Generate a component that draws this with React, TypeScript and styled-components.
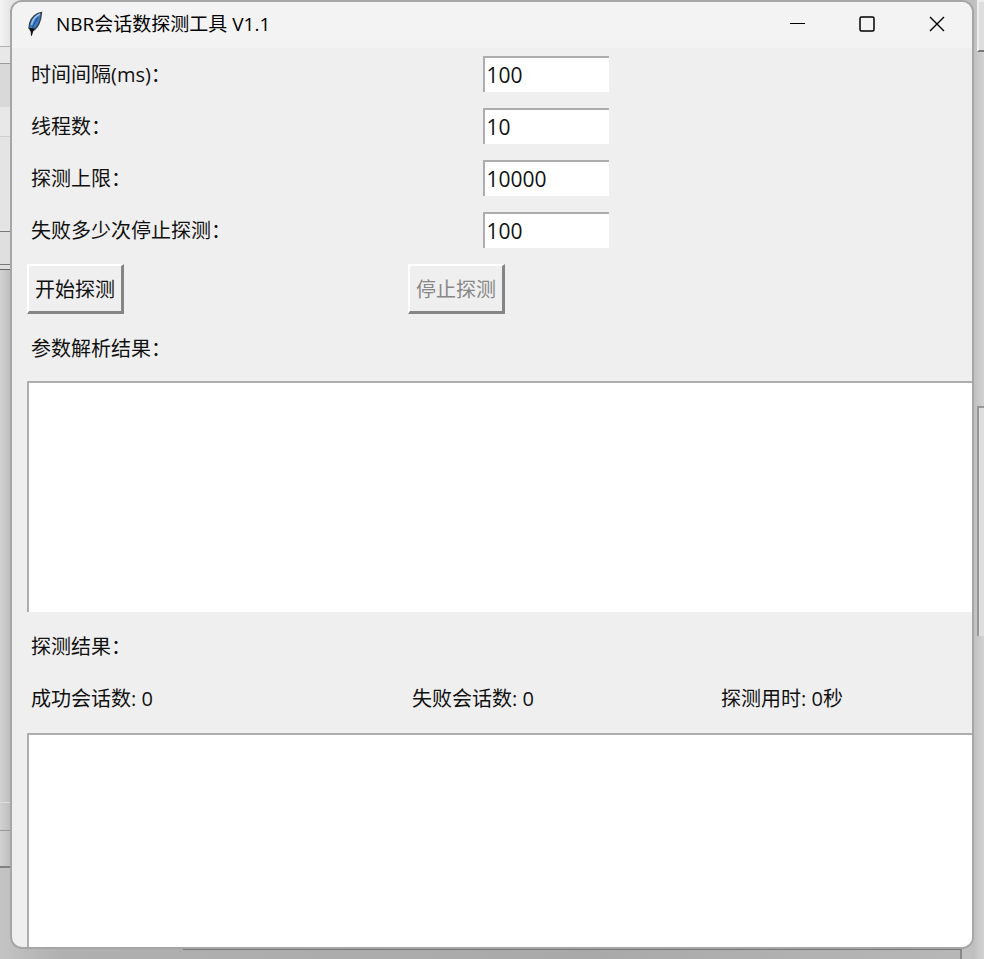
import React, { useState } from "react";
import styled, { createGlobalStyle } from "styled-components";

const GlobalStyle = createGlobalStyle`
  * { box-sizing: border-box; }
  html, body, #root { height: 100%; margin: 0; }
  body {
    font-family: "Open Sans", "Noto Sans CJK SC", sans-serif;
    font-size: 20px;
    line-height: 28px;
    color: #111;
    overflow: hidden;
  }
`;

const Desktop = styled.div`
  position: relative;
  height: 100vh;
  padding: 0 10px 10px;
  background: linear-gradient(90deg, #c4c4c4, #b0b0b0 60px, #a9a9a9 60%, #b8b8b8);
  overflow: hidden;
`;

const BackWindow = styled.div`
  position: absolute;
  inset: 0 auto 91px 0;
  width: 60px;
  background: linear-gradient(90deg, #d2d2d2, #bebebe 10px);
  border-bottom: 2px solid #808080;
`;

const BackBand = styled.div<{ $height: number; $fill: string; $line: string }>`
  height: ${(p) => p.$height}px;
  background: ${(p) => p.$fill};
  border-bottom: 1px solid ${(p) => p.$line};
`;

const BackEdge = styled.div`
  position: absolute;
  inset: 0 0 0 auto;
  width: 22px;
  padding-left: 15px;
  background: linear-gradient(90deg, #c0c0c0 12px, #d2d2d2);
`;

const BackButton = styled.div`
  height: 52px;
  margin-bottom: 354px;
  border: solid #eee;
  border-width: 2px 0 0 2px;
  border-bottom: 2px solid #777;
  background: #dedede;
`;

const BackField = styled.div`
  height: 230px;
  border: solid #979797;
  border-width: 2px 0 0 2px;
  background: #dedede;
`;

const BackShelf = styled.div`
  position: absolute;
  left: 183px;
  right: 22px;
  bottom: 0;
  height: 11px;
  border-top: 2px solid #777;
  border-right: 2px solid #888;
`;

const AppWindow = styled.main`
  position: relative;
  display: flex;
  flex-direction: column;
  height: 100%;
  border: 2px solid #a6a6a6;
  border-radius: 12px;
  background: #efefef;
  overflow: hidden;
`;

const TitleBar = styled.header`
  display: flex;
  align-items: center;
  flex: none;
  height: 46px;
  padding: 0 0 2px 14px;
  background: #f3f3f3;
`;

const Title = styled.h1`
  flex: 1;
  margin: 0 0 0 12px;
  font-size: 19px;
  font-weight: 400;
  color: #000;
`;

const CaptionButton = styled.button`
  display: flex;
  align-items: center;
  justify-content: center;
  width: 70px;
  height: 100%;
  padding: 0;
  border: 0;
  background: transparent;
`;

const Body = styled.form`
  display: flex;
  flex-direction: column;
  flex: 1;
  min-height: 0;
  padding-left: 15px;
`;

const Columns = styled.div`
  display: grid;
  grid-template-columns: 381fr 275fr 194fr 95fr;
  align-items: center;
`;

const Fields = styled(Columns)`
  grid-auto-rows: 52px;
`;

const Actions = styled(Columns)`
  height: 66px;
`;

const Stats = styled(Columns)`
  height: 52px;
`;

const Label = styled.label`
  padding: 2px 0 0 4px;
`;

const Heading = styled.label`
  padding: 13px 4px 12px;
`;

const Stat = styled.span<{ $centered?: boolean }>`
  padding-left: 4px;
  text-align: ${(p) => (p.$centered ? "center" : "left")};
`;

const Entry = styled.input`
  justify-self: center;
  width: 126px;
  height: 36px;
  padding: 0 2px;
  border: solid #adadad;
  border-width: 2px 0 0 2px;
  outline: 0;
  background: #fff;
  color: #111;
  font: inherit;
  font-size: 21px;
`;

const PushButton = styled.button`
  justify-self: start;
  height: 50px;
  padding: 2px 6px 0;
  border: solid;
  border-width: 2px 3px 3px 2px;
  border-color: #fff #858585 #858585 #fff;
  background: #efefef;
  color: #111;
  font: inherit;
  &:disabled { color: #878787; }
`;

const Log = styled.textarea<{ $fill?: boolean }>`
  display: block;
  flex: ${(p) => (p.$fill ? "1" : "none")};
  width: 100%;
  height: 231px;
  min-height: 0;
  padding: 2px;
  border: solid #adadad;
  border-width: 2px 0 0 2px;
  outline: 0;
  resize: none;
  background: #fff;
  font: inherit;
`;

const Gap = styled.div<{ $height: number }>`
  flex: none;
  height: ${(p) => p.$height}px;
`;

const Feather = () => (
  <svg width="18" height="26" viewBox="0 0 18 26" aria-hidden="true">
    <path d="M15.500 1.500C10 2 5 7 3.800 12L3 17l2.500 3.500C10 18.500 13 14 14.500 8z" fill="#3c7cc6" stroke="#39424c" strokeWidth="1.400" />
    <path d="M14 3C9.500 5 6.500 9 5.500 14" fill="none" stroke="#9cc3ea" strokeWidth="1.600" />
    <path d="M12 6.500C9 11 6.500 14 6 19" fill="none" stroke="#1f4f8c" strokeWidth="1.200" />
    <path d="M4 17l1.200 3.500.3 4 1.200-4.500 1.500-2.500" fill="#111" stroke="#111" strokeWidth="1" />
  </svg>
);

const fields = [
  { id: "interval", label: "时间间隔(ms)：", value: "100" },
  { id: "threads", label: "线程数：", value: "10" },
  { id: "limit", label: "探测上限：", value: "10000" },
  { id: "failures", label: "失败多少次停止探测：", value: "100" },
];

export default function App() {
  const [values, setValues] = useState<Record<string, string>>(
    Object.fromEntries(fields.map((f) => [f.id, f.value]))
  );

  return (
    <>
      <GlobalStyle />
      <Desktop>
        <BackWindow>
          <BackBand $height={47} $fill="linear-gradient(90deg, #f4f4f4, #e6e6e6 10px)" $line="#b0b0b0" />
          <BackBand $height={17} $fill="#e8e8e8" $line="#9a9a9a" />
          <BackBand $height={44} $fill="#d9d9d9" $line="#e6e6e6" />
          <BackBand $height={29} $fill="#e8e8e8" $line="#d0d0d0" />
          <BackBand $height={95} $fill="#e4e4e4" $line="#777" />
          <BackBand $height={33} $fill="#dfdfdf" $line="#777" />
          <BackBand $height={5} $fill="#dedede" $line="#666" />
          <BackBand $height={533} $fill="transparent" $line="#dedede" />
          <BackBand $height={28} $fill="transparent" $line="#999" />
        </BackWindow>
        <BackEdge>
          <BackButton />
          <BackField />
        </BackEdge>
        <BackShelf />
        <AppWindow>
          <TitleBar>
            <Feather />
            <Title>NBR会话数探测工具 V1.1</Title>
            <CaptionButton type="button" aria-label="最小化">
              <svg width="16" height="16" viewBox="0 0 16 16">
                <path d="M1 7.500h15" stroke="#000" />
              </svg>
            </CaptionButton>
            <CaptionButton type="button" aria-label="最大化">
              <svg width="16" height="16" viewBox="0 0 16 16" fill="none">
                <rect x="1" y="1" width="14" height="14" rx="1.500" stroke="#000" strokeWidth="1.500" />
              </svg>
            </CaptionButton>
            <CaptionButton type="button" aria-label="关闭">
              <svg width="16" height="16" viewBox="0 0 16 16">
                <path d="M1 1l14 14M15 1L1 15" stroke="#000" strokeWidth="1.400" />
              </svg>
            </CaptionButton>
          </TitleBar>
          <Body onSubmit={(e) => e.preventDefault()}>
            <Fields>
              {fields.map((f) => (
                <React.Fragment key={f.id}>
                  <Label htmlFor={f.id}>{f.label}</Label>
                  <Entry
                    id={f.id}
                    value={values[f.id]}
                    onChange={(e) => setValues({ ...values, [f.id]: e.target.value })}
                  />
                  <span />
                  <span />
                </React.Fragment>
              ))}
            </Fields>
            <Actions>
              <PushButton type="submit">开始探测</PushButton>
              <PushButton type="button" disabled>停止探测</PushButton>
            </Actions>
            <Heading htmlFor="parsed">参数解析结果：</Heading>
            <Gap $height={6} />
            <Log id="parsed" />
            <Gap $height={8} />
            <Heading htmlFor="results">探测结果：</Heading>
            <Stats>
              <Stat>成功会话数: 0</Stat>
              <Stat>失败会话数: 0</Stat>
              <Stat $centered>探测用时: 0秒</Stat>
            </Stats>
            <Gap $height={8} />
            <Log id="results" $fill />
          </Body>
        </AppWindow>
      </Desktop>
    </>
  );
}
